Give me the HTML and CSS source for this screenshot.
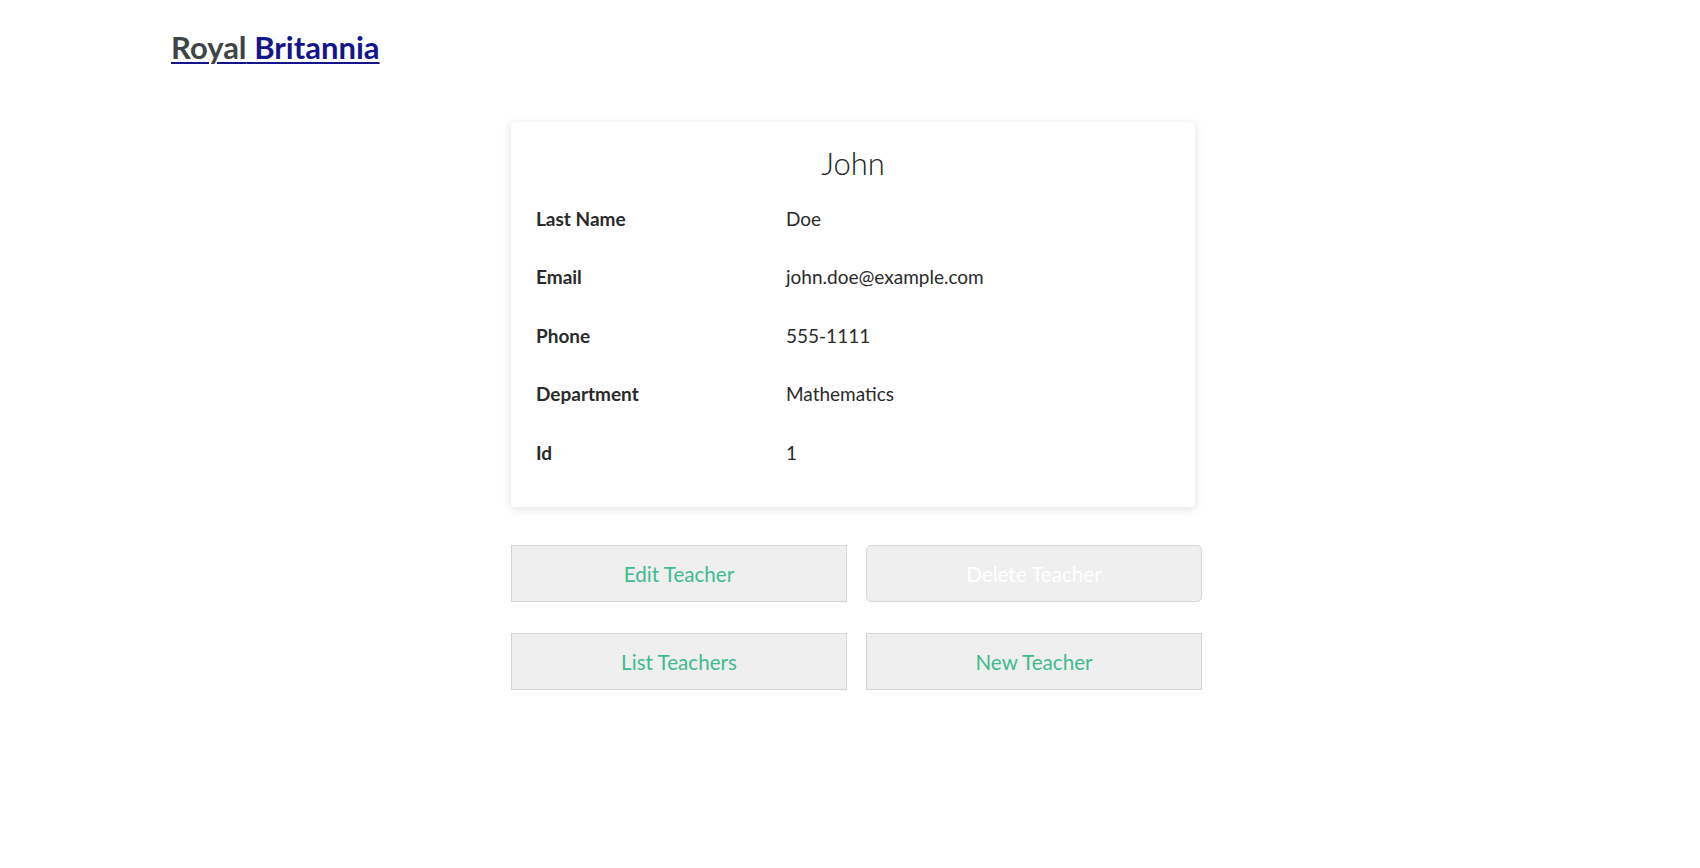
FILE: index.html
```html
<!DOCTYPE html>
<html>
<head>
<meta charset="utf-8">
<link rel="stylesheet" href="styles.css">
</head>
<body>
<header class="site-header">
  <a class="brand" href="#"><span class="brand-royal">Royal</span> <span class="brand-brit">Britannia</span></a>
</header>
<main class="content">
  <section class="card">
    <h2 class="card-title">John</h2>
    <div class="rows">
      <div class="row"><span class="label">Last Name</span><span class="value">Doe</span></div>
      <div class="row"><span class="label">Email</span><span class="value">john.doe@example.com</span></div>
      <div class="row"><span class="label">Phone</span><span class="value">555-1111</span></div>
      <div class="row"><span class="label">Department</span><span class="value">Mathematics</span></div>
      <div class="row"><span class="label">Id</span><span class="value">1</span></div>
    </div>
  </section>
  <div class="actions">
    <button class="btn">Edit Teacher</button>
    <button class="btn btn-disabled" disabled>Delete Teacher</button>
    <button class="btn">List Teachers</button>
    <button class="btn">New Teacher</button>
  </div>
</main>
</body>
</html>
```

FILE: styles.css
```css
html, body {
  margin: 0;
  padding: 0;
  background: #ffffff;
}
body {
  font-family: Lato, "Open Sans", sans-serif;
  color: #2c3e50;
}
.site-header {
  padding: 29px 0 0 171px;
  height: 93px;
  box-sizing: border-box;
}
.brand {
  font-size: 31px;
  font-weight: 700;
  line-height: 1.2;
  color: #14148c;
  text-decoration: underline;
  text-decoration-thickness: 2px;
  text-underline-offset: 3px;
}
.brand-royal {
  color: #3f4446;
}
.brand-brit {
  color: #14148c;
}
.content {
  width: 691px;
  margin-left: 511px;
  padding-top: 29px;
}
.card {
  width: 684px;
  box-sizing: border-box;
  background: #fff;
  border-radius: 4px;
  box-shadow: 0 2px 10px rgba(0, 0, 0, 0.13);
  padding: 23.4px 25px 24.5px 25px;
}
.card-title {
  margin: 0;
  text-align: center;
  font-size: 31px;
  font-weight: 300;
  line-height: 1.2;
  color: #222;
}
.rows {
  margin-top: 7.5px;
  display: flex;
  flex-direction: column;
}
.row {
  display: grid;
  grid-template-columns: 250px 1fr;
  padding: 17.85px 0;
  font-size: 19px;
  line-height: 1.2;
  color: #2a2a2a;
}
.label {
  font-weight: 700;
}
.value {
  font-weight: 400;
}
.actions {
  margin-top: 38px;
  display: grid;
  grid-template-columns: 336px 336px;
  column-gap: 19px;
  row-gap: 31px;
}
.btn {
  height: 57px;
  background: #efefef;
  border: 1px solid #d3d3d3;
  border-radius: 0;
  font-family: Lato, "Open Sans", sans-serif;
  font-size: 20.6px;
  color: #3fba8f;
  padding: 0;
}
.btn-disabled {
  border-radius: 5px;
  color: #ffffff;
  border-color: #d8d8d8;
}
```
